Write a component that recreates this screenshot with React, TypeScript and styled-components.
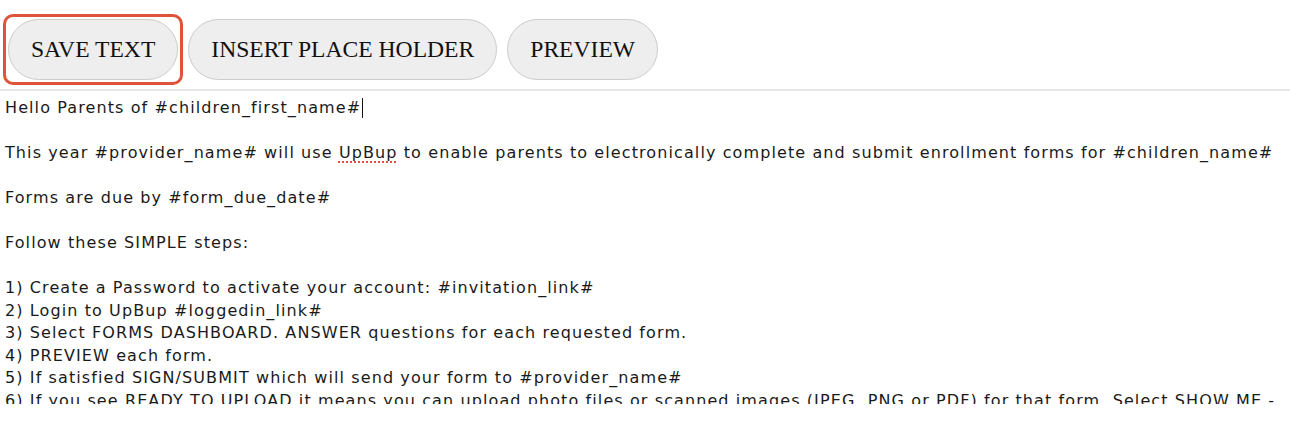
import React from 'react';
import styled, { createGlobalStyle } from 'styled-components';

const GlobalStyle = createGlobalStyle`
  html, body {
    margin: 0;
    padding: 0;
    background: #ffffff;
  }
`;

const Page = styled.div`
  width: 1290px;
  height: 444px;
  overflow: hidden;
  background: #ffffff;
`;

const Toolbar = styled.div`
  display: flex;
  align-items: center;
  gap: 10px;
  padding: 19px 0 9px 8px;
  border-bottom: 2px solid #e6e6e6;
`;

const Button = styled.button`
  height: 61px;
  padding: 0 22px;
  border: 1px solid #cccccc;
  border-radius: 31px;
  background: #eeeeee;
  color: #111111;
  font-family: 'Liberation Serif', 'Times New Roman', serif;
  font-size: 23.6px;
  line-height: 1;
  cursor: pointer;
`;

// focus ring drawn around the active button
const FocusRing = styled.span`
  display: inline-flex;
  padding: 2px;
  margin: -5px;
  border: 3px solid #e0533b;
  border-radius: 10px;
`;

const Editor = styled.div`
  box-sizing: border-box;
  height: 313px;
  overflow: hidden;
  padding: 6px 5px 0;
  font-family: 'DejaVu Sans', Verdana, sans-serif;
  font-size: 16px;
  letter-spacing: 1.1px;
  line-height: 22.5px;
  color: #1a1a1a;
  white-space: nowrap;
`;

const Line = styled.div`
  min-height: 22.5px;
`;

const Misspelled = styled.span`
  text-decoration: underline dotted #e0533b;
  text-decoration-thickness: 2px;
  text-underline-offset: 3px;
`;

const Caret = styled.span`
  display: inline-block;
  width: 1px;
  height: 20px;
  margin-left: 1px;
  vertical-align: -5px;
  background: #111111;
`;

const lines: React.ReactNode[] = [
  <>Hello Parents of #children_first_name#<Caret /></>,
  '',
  <>
    This year #provider_name# will use <Misspelled>UpBup</Misspelled> to enable parents to electronically complete and submit enrollment forms for #children_name#
  </>,
  '',
  'Forms are due by #form_due_date#',
  '',
  'Follow these SIMPLE steps:',
  '',
  '1) Create a Password to activate your account: #invitation_link#',
  '2) Login to UpBup #loggedin_link#',
  '3) Select FORMS DASHBOARD. ANSWER questions for each requested form.',
  '4) PREVIEW each form.',
  '5) If satisfied SIGN/SUBMIT which will send your form to #provider_name#',
  '6) If you see READY TO UPLOAD it means you can upload photo files or scanned images (JPEG, PNG or PDF) for that form. Select SHOW ME -',
];

const App = () => {
  return (
    <Page>
      <GlobalStyle />
      <Toolbar>
        <FocusRing>
          <Button>SAVE TEXT</Button>
        </FocusRing>
        <Button>INSERT PLACE HOLDER</Button>
        <Button>PREVIEW</Button>
      </Toolbar>
      <Editor>
        {lines.map((l, i) => (
          <Line key={i}>{l}</Line>
        ))}
      </Editor>
    </Page>
  );
};

export default App;
